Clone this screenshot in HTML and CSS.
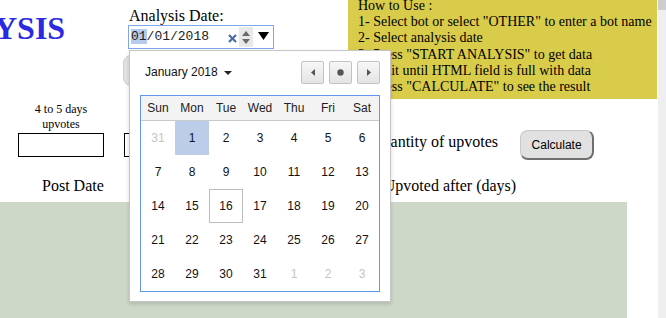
FILE: index.html
```html
<!DOCTYPE html>
<html lang="en">
<head>
<meta charset="utf-8">
<title>Analysis</title>
<link rel="stylesheet" href="styles.css">
</head>
<body>
<div class="page">
  <header class="top">
    <h1 class="title">YSIS</h1>
    <div class="date-col">
      <label class="date-label">Analysis Date:</label>
      <div class="date-input">
        <span class="date-text"><span class="seg-hl">01</span>/01/2018</span>
        <svg class="clear" width="9" height="9" viewBox="0 0 9 9"><path d="M1 1 L8 8 M8 1 L1 8" stroke="#4a6da8" stroke-width="2.2" fill="none"/></svg>
        <span class="spin">
          <svg width="8" height="5" viewBox="0 0 8 5"><path d="M4 0 L8 5 L0 5 Z" fill="#6a6a6a"/></svg>
          <svg width="8" height="5" viewBox="0 0 8 5"><path d="M0 0 L8 0 L4 5 Z" fill="#6a6a6a"/></svg>
        </span>
        <svg class="drop" width="11" height="8" viewBox="0 0 11 8"><path d="M0 0 L11 0 L5.5 8 Z" fill="#000"/></svg>
      </div>
      <button class="start-btn" aria-label="Start analysis"></button>
    </div>
    <div class="howto">
      <div class="howto-text">
        How to Use :<br>
        1- Select bot or select "OTHER" to enter a bot name<br>
        2- Select analysis date<br>
        3- Press "START ANALYSIS" to get data<br>
        4- Wait until HTML field is full with data<br>
        5- Press "CALCULATE" to see the result
      </div>
    </div>
  </header>

  <section class="inputs">
    <div class="field">
      <div class="small">4 to 5 days<br>upvotes</div>
      <div class="box"></div>
    </div>
    <div class="field field2">
      <div class="small small-blank"></div>
      <div class="box"></div>
    </div>
    <div class="qty">Quantity of upvotes</div>
    <button class="calc">Calculate</button>
  </section>

  <section class="labels">
    <div class="post-date">Post Date</div>
    <div class="upvoted">Upvoted after (days)</div>
  </section>

  <div class="green"></div>
</div>

<div class="picker">
  <div class="picker-head">
    <div class="month">January 2018 <svg width="8" height="4" viewBox="0 0 8 4"><path d="M0 0 L8 0 L4 4 Z" fill="#222"/></svg></div>
    <div class="navs">
      <span class="nav"><svg width="4" height="7" viewBox="0 0 4 7"><path d="M4 0 L4 7 L0 3.5 Z" fill="#555"/></svg></span>
      <span class="nav"><svg width="7" height="7" viewBox="0 0 7 7"><circle cx="3.5" cy="3.5" r="3.2" fill="#555"/></svg></span>
      <span class="nav"><svg width="4" height="7" viewBox="0 0 4 7"><path d="M0 0 L4 3.5 L0 7 Z" fill="#555"/></svg></span>
    </div>
  </div>
  <div class="cal">
    <div class="wk"><span>Sun</span><span>Mon</span><span>Tue</span><span>Wed</span><span>Thu</span><span>Fri</span><span>Sat</span></div>
    <div class="days">
      <span class="other">31</span><span class="sel">1</span><span>2</span><span>3</span><span>4</span><span>5</span><span>6</span>
      <span>7</span><span>8</span><span>9</span><span>10</span><span>11</span><span>12</span><span>13</span>
      <span>14</span><span>15</span><span class="today">16</span><span>17</span><span>18</span><span>19</span><span>20</span>
      <span>21</span><span>22</span><span>23</span><span>24</span><span>25</span><span>26</span><span>27</span>
      <span>28</span><span>29</span><span>30</span><span>31</span><span class="other">1</span><span class="other">2</span><span class="other">3</span>
    </div>
  </div>
</div>

<div class="scrollbar"><div class="thumb"></div></div>
</body>
</html>
```

FILE: styles.css
```css
* { box-sizing: border-box; }
html, body { margin: 0; padding: 0; overflow: hidden; }
body {
  width: 666px;
  height: 318px;
  background: #fff;
  font-family: "Liberation Serif", "Times New Roman", serif;
  color: #000;
  position: relative;
}
.page { width: 658px; }

.top { display: flex; height: 100px; }
.title {
  width: 134px;
  margin: 0 0 0 -6px;
  padding-top: 10px;
  font-size: 32px;
  line-height: 36px;
  font-weight: bold;
  color: #2a2ae0;
  flex: none;
}
.date-col { width: 220px; display: flex; flex-direction: column; align-items: flex-start; }
.date-label {
  font-size: 16px;
  line-height: 18px;
  margin-top: 7px;
  margin-left: 1px;
}
.date-input {
  width: 146px;
  height: 24px;
  border: 1px solid #7ea8e8;
  display: flex;
  align-items: center;
  background: #fff;
}
.date-text {
  font-family: "Liberation Mono", "Courier New", monospace;
  font-size: 13px;
  line-height: 16px;
  color: #222;
  margin-left: 2px;
  width: 97px;
}
.seg-hl { background: #b4cbef; }
.clear { margin-top: 2px; }
.spin {
  width: 14px;
  height: 20px;
  margin-left: 2px;
  background: #e8e8e8;
  display: flex;
  flex-direction: column;
  align-items: center;
  justify-content: center;
  gap: 3px;
}
.drop { margin-left: 5px; margin-top: -2px; }
.start-btn {
  margin-top: 6px;
  margin-left: -5px;
  width: 200px;
  height: 31px;
  border-radius: 8px;
  background: #e2e2e2;
  border: 1px solid #cfcfcf;
}
.howto {
  width: 309px;
  height: 99px;
  background: #d9cc4a;
  padding-left: 10px;
  flex: none;
  overflow: hidden;
}
.howto-text {
  margin-top: -2px;
  font-size: 14px;
  line-height: 16.2px;
  white-space: nowrap;
}

.inputs { display: flex; align-items: flex-start; height: 60px; }
.field { width: 86px; margin-left: 18px; display: flex; flex-direction: column; align-items: center; }
.field2 { margin-left: 20px; }
.small {
  font-size: 12px;
  line-height: 15px;
  text-align: center;
  margin-top: 2px;
  white-space: nowrap;
}
.small-blank { height: 30px; }
.box {
  margin-top: 1px;
  width: 86px;
  height: 24px;
  border: 1px solid #000;
  background: #fff;
}
.qty {
  margin-left: 161px;
  margin-top: 33px;
  font-size: 16px;
  line-height: 18px;
  white-space: nowrap;
}
.calc {
  margin-left: 22px;
  margin-top: 30px;
  width: 74px;
  height: 30px;
  border-radius: 8px;
  background: #e1e1e1;
  border-top: 1px solid #c8c8c8;
  border-left: 1px solid #c8c8c8;
  border-right: 2px solid #6f6f6f;
  border-bottom: 2px solid #6f6f6f;
  font-family: "Liberation Sans", Arial, sans-serif;
  font-size: 12px;
  color: #000;
  padding: 0;
}

.labels { display: flex; height: 42px; padding-top: 17px; }
.post-date { margin-left: 42px; font-size: 16px; line-height: 18px; }
.upvoted { margin-left: 280px; font-size: 16px; line-height: 18px; white-space: nowrap; }
.green { width: 627px; height: 116px; background: #cdd8c8; }

.picker {
  position: absolute;
  left: 129px;
  top: 50px;
  width: 262px;
  height: 252px;
  background: #fff;
  border: 1px solid #c6c6c6;
  box-shadow: 0 2px 4px rgba(0,0,0,0.15);
  padding: 10px;
  font-family: "Liberation Sans", Arial, sans-serif;
  font-size: 12px;
  color: #111;
  z-index: 2;
}
.picker-head {
  display: flex;
  justify-content: space-between;
  height: 23px;
  margin-bottom: 11px;
}
.month {
  margin-left: 5px;
  line-height: 23px;
  font-size: 12px;
  display: flex;
  align-items: center;
  gap: 6px;
}
.navs { display: flex; gap: 5px; }
.nav {
  width: 23px;
  height: 23px;
  border: 1px solid #c2c2c2;
  border-radius: 2px;
  background: linear-gradient(#f7f7f7, #e4e4e4);
  display: flex;
  align-items: center;
  justify-content: center;
}
.cal { border: 1px solid #5f98ee; width: 240px; }
.wk {
  display: grid;
  grid-template-columns: repeat(7, 34px);
  height: 25px;
  background: #f3f3f3;
  border-bottom: 1px solid #c9c9c9;
}
.wk span { text-align: center; line-height: 24px; color: #222; }
.days { display: grid; grid-template-columns: repeat(7, 34px); grid-auto-rows: 34px; }
.days span { text-align: center; line-height: 34px; color: #111; }
.days .other { color: #c4c4c4; }
.days .sel { background: #bccdea; }
.days .today { border: 1px solid #bcbcbc; line-height: 32px; }

.scrollbar {
  position: absolute;
  left: 658px;
  top: 0;
  width: 8px;
  height: 318px;
  background: #efefef;
}
.thumb { height: 10px; background: #cdcdcd; }
```
